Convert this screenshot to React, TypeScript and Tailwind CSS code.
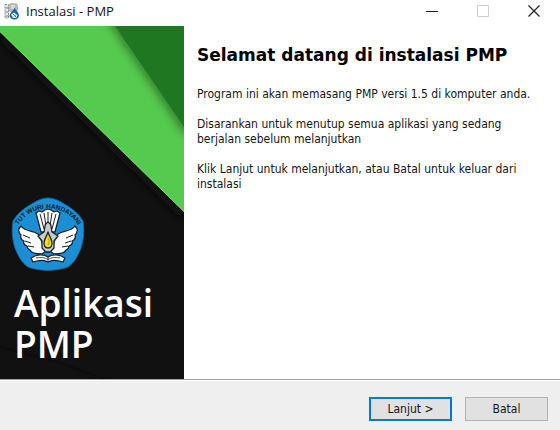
import React from "react";

function InstallerIcon() {
  return (
    <svg viewBox="0 0 16 17" className="h-[17px] w-4" aria-hidden="true">
      <path d="M1 1.500h3.500v13.500H1z" fill="#ececec" stroke="#8b8b8b" strokeWidth="1" strokeDasharray="2 1" />
      <path d="M4 2l3-1.500 6 .5 1 6-4 2-5-1z" fill="#b8b8b8" stroke="#a0a0a0" strokeWidth=".6" />
      <path d="M7 2h4v4H7z" fill="#dcdcdc" />
      <path d="M1.500 5h3M1.500 9h3M1.500 13h4" stroke="#777" />
      <path d="M10.500 4.500c1 3 4.500 4.500 4.500 8 0 2.500-2 4-4.500 4s-4.800-1.500-4.800-4c0-3 4-4.500 4.800-8z" fill="#17689f" />
      <path d="M7 11.500l3-2 3.500 2.500-1 2.800-3.500.2z" fill="#e9f5fb" />
      <path d="M9 11l3 3M12 11.500l-2 2" stroke="#2488bd" strokeWidth="1" />
    </svg>
  );
}

function Emblem() {
  return (
    <svg viewBox="0 0 74 74" className="h-[74px] w-[74px]" role="img" aria-label="Tut Wuri Handayani">
      <path
        d="M37 1C43 1 49 4 55 8C62 12 68 17 72 24C73.500 32 73 42 70 51C67 59 63 66 57 70C45 74.500 29 74.500 17 70C11 66 7 59 4 51C1 42 .5 32 2 24C6 17 12 12 19 8C25 4 31 1 37 1Z"
        fill="#1b8ed4"
        stroke="#17699d"
        strokeWidth=".8"
      />
      <path id="motto" d="M5 32Q15 12 37 11.500Q59 12 69 32" fill="none" />
      <text fontSize="6.500" fontWeight="700" fill="#0b1d2b" className="font-['Liberation_Sans',sans-serif]">
        <textPath href="#motto" startOffset="50%" textAnchor="middle">
          TUT WURI HANDAYANI
        </textPath>
      </text>
      <g stroke="#182129" strokeWidth="1.300" strokeLinejoin="round">
        <path
          d="M10 29C14 35 22 33 27 37C32 42 30 49 35 54L31 57C25 57 20 56 19 53C17 52 16 50 16 49C13 48 12 46 13 44C10 43 9 40 10 38C7 35 7 32 10 29Z"
          fill="#fff"
        />
        <path
          d="M64 29C60 35 52 33 47 37C42 42 44 49 39 54L43 57C49 57 54 56 55 53C57 52 58 50 58 49C61 48 62 46 61 44C64 43 65 40 64 38C67 35 67 32 64 29Z"
          fill="#fff"
        />
        <path d="M25 16L28 14L31 15L34 13L37 12L40 13L43 15L46 14L49 16L44 35H30Z" fill="#fff" />
        <path d="M29 17L33 32M33 16L35 29M37 15V26M41 16L39 29M45 17L41 32" fill="none" strokeWidth="1" />
        <path d="M34 29C34 27 35.500 26 37 25C38.500 26 40 27 40 29L41 35L47 39L43 44V51L39 55H35L31 51V44L27 39L33 35Z" fill="#c8cbce" />
        <path d="M12 38L19 41M14 44L20 46M17 49L23 50M62 38L55 41M60 44L54 46M57 49L51 50" fill="none" strokeWidth="1" />
        <path d="M20 61C26 57 33 57 37 60C41 57 48 57 54 61L52 65C46 63 40 63 37 65C34 63 28 63 22 65Z" fill="#fff" />
        <path d="M25 61C30 60 34 60.500 37 62.500C40 60.500 44 60 49 61M37 60V65" fill="none" strokeWidth=".8" />
        <path d="M37 35C38 39 41 42 41 46C41 50 39 51 37 51C35 51 33 50 33 46C33 42 36 39 37 35Z" fill="#f4df14" />
      </g>
      <path d="M37 41C39 44 38 45 37 48" fill="none" stroke="#a98b13" strokeWidth="1" />
    </svg>
  );
}

function PanelArt() {
  return (
    <svg viewBox="0 0 184 353" preserveAspectRatio="none" className="absolute inset-0 h-full w-full" aria-hidden="true">
      <defs>
        <filter id="soft" x="-20%" y="-20%" width="140%" height="140%">
          <feGaussianBlur stdDeviation="4" />
        </filter>
        <clipPath id="band">
          <path d="M0 0H184V186L0 6Z" />
        </clipPath>
      </defs>
      <path d="M0 0H184V353H0Z" fill="#111111" />
      <path d="M0 10L184 191" stroke="#0b0b0b" strokeWidth="6" filter="url(#soft)" />
      <path d="M0 0H184V186L0 6Z" fill="#56ca4e" />
      <g clipPath="url(#band)">
        <path d="M112 -6L188 106" stroke="#2c6a26" strokeWidth="8" opacity=".85" filter="url(#soft)" />
        <path d="M115 0H184V101Z" fill="#1f7722" />
      </g>
      <path d="M0 5.500L184 185.500" stroke="#68e35d" strokeWidth="1" />
      <path d="M0 321L60 337L105 353" fill="none" stroke="#0d0d0d" strokeWidth="2" />
    </svg>
  );
}

const captionButton = "flex h-full w-[51px] items-center justify-center";
const actionButton =
  "h-6 w-[83px] bg-[#e1e1e1] text-[12px] leading-4 text-[#151515]";

export default function App() {
  return (
    <div className="flex min-h-screen flex-col bg-white font-['DejaVu_Sans_Condensed','DejaVu_Sans',sans-serif] text-[#151515]">
      <header className="flex h-[26px] items-center pb-1 pl-1">
        <InstallerIcon />
        <span className="ml-[6px] font-['Open_Sans',sans-serif] text-[13px] leading-4">Instalasi - PMP</span>
        <div className="ml-auto flex h-full pr-px">
          <button type="button" aria-label="Minimize" className={captionButton}>
            <svg viewBox="0 0 12 12" className="h-3 w-3">
              <path d="M0 6.500H12" stroke="#222" strokeWidth="1" />
            </svg>
          </button>
          <button type="button" aria-label="Maximize" disabled className={captionButton}>
            <svg viewBox="0 0 12 12" className="h-3 w-3">
              <path d="M.5 .5H11.500V11.500H.5Z" fill="none" stroke="#cfcfcf" />
            </svg>
          </button>
          <button type="button" aria-label="Close" className={captionButton}>
            <svg viewBox="0 0 12 12" className="h-3 w-3">
              <path d="M.5 .5L11.500 11.500M11.500 .5L.5 11.500" stroke="#222" strokeWidth="1.200" />
            </svg>
          </button>
        </div>
      </header>

      <main className="flex flex-1">
        <aside className="relative w-[184px] shrink-0 bg-[#111111]">
          <PanelArt />
          <div className="relative pt-[171px] pl-[11px]">
            <Emblem />
            <p className="mt-[11px] pl-[3px] font-['Open_Sans',sans-serif] text-[37px] leading-[41px] font-semibold text-white">
              Aplikasi
              <br />
              PMP
            </p>
          </div>
        </aside>
        <section className="flex-1 pt-[17px] pr-4 pl-[13px]">
          <h1 className="font-['DejaVu_Sans',sans-serif] text-[17px] leading-6 font-bold text-black">
            Selamat datang di instalasi PMP
          </h1>
          <div className="mt-5 flex flex-col gap-[15px] text-[12px] leading-[15px]">
            <p>Program ini akan memasang PMP versi 1.5 di komputer anda.</p>
            <p>
              Disarankan untuk menutup semua aplikasi yang sedang
              <br />
              berjalan sebelum melanjutkan
            </p>
            <p>
              Klik Lanjut untuk melanjutkan, atau Batal untuk keluar dari
              <br />
              instalasi
            </p>
          </div>
        </section>
      </main>

      <footer className="border-t border-[#a0a0a0] bg-[#efefef]">
        <div className="flex h-[50px] items-center justify-end gap-[13px] border-t border-white pt-[6px] pr-3">
          <button type="button" className={`${actionButton} border-2 border-[#0078d7]`}>
            Lanjut &gt;
          </button>
          <button type="button" className={`${actionButton} border border-[#adb2b5]`}>
            Batal
          </button>
        </div>
      </footer>
    </div>
  );
}
